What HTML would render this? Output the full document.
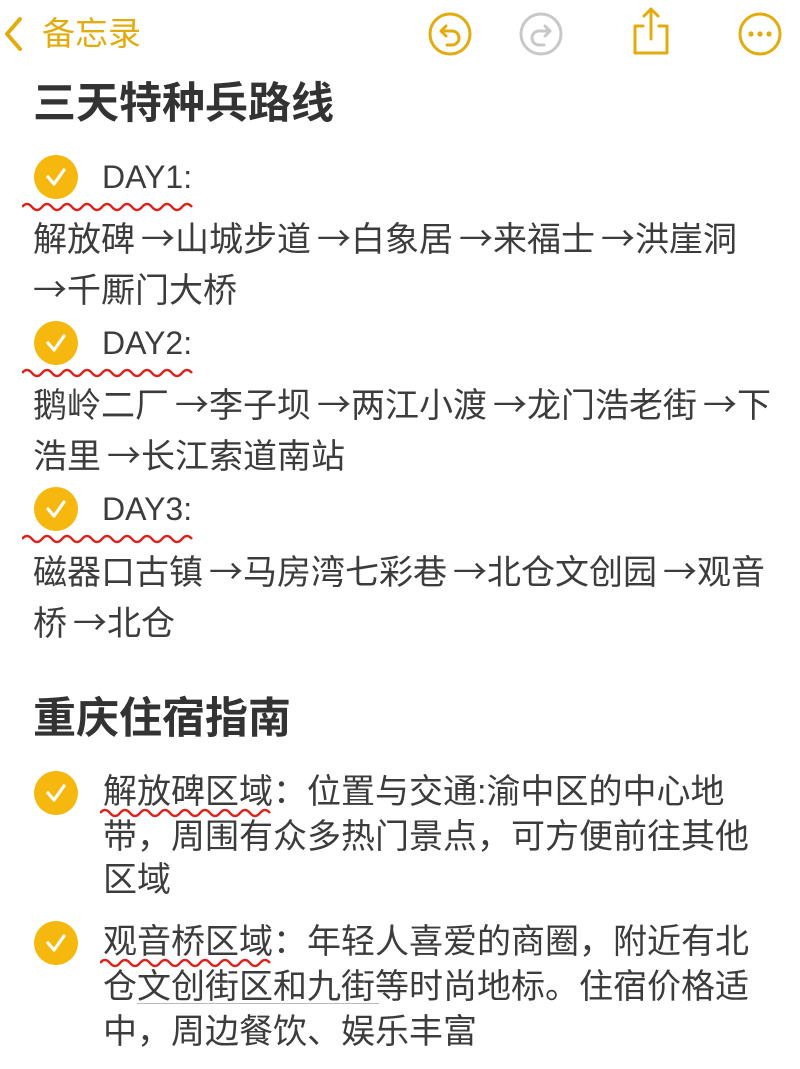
<!DOCTYPE html>
<html><head><meta charset="utf-8"><style>
body{margin:0;width:800px;height:1069px;background:#fff;position:relative;overflow:hidden;font-family:"Liberation Sans","Noto Sans CJK SC",sans-serif;color:#3c3c3c}
.t{position:absolute;white-space:nowrap;line-height:1;font-size:34px}
.h{font-size:43px;font-weight:bold;color:#333}
.a{font-family:"Noto Sans CJK SC",sans-serif;margin-left:6px}
.ck{position:absolute;width:44px;height:44px;border-radius:50%;background:#f6b80f}
.ck svg{position:absolute;left:0;top:0}
.sq{position:absolute}
</style></head><body>
<svg style="position:absolute;left:0;top:0" width="800" height="70">
<path d="M20 19 L7 34 L20 49" fill="none" stroke="#e3ac0e" stroke-width="4" stroke-linecap="round" stroke-linejoin="round"/>
<g fill="none" stroke="#e3ac0e" stroke-width="3"><circle cx="450" cy="34" r="20"/><path d="M446 26 L441 31 L446 36 M441 31 H452 A7 7 0 0 1 452 45 H447" stroke-linecap="round" stroke-linejoin="round"/></g>
<g fill="none" stroke="#c8c8c8" stroke-width="3"><circle cx="541" cy="34" r="20"/><path d="M545 26 L550 31 L545 36 M550 31 H539 A7 7 0 0 0 539 45 H544" stroke-linecap="round" stroke-linejoin="round"/></g>
<g fill="none" stroke="#e3ac0e" stroke-width="3" stroke-linecap="round" stroke-linejoin="round"><path d="M643 26 H635 V53 H667 V26 H659"/><path d="M651 9 V39 M644 16 L651 9 L658 16"/></g>
<g fill="none" stroke="#e3ac0e" stroke-width="3"><circle cx="760" cy="34" r="20"/></g>
<g fill="#e3ac0e"><circle cx="751" cy="34" r="2.6"/><circle cx="760" cy="34" r="2.6"/><circle cx="769" cy="34" r="2.6"/></g>
</svg>
<div class="t" style="left:42px;top:17px;font-size:33px;color:#e3ac0e">备忘录</div>
<div class="t h" style="left:33px;top:83px">三天特种兵路线</div>

<div class="ck" style="left:34px;top:155px"><svg width="44" height="44"><path d="M14 22 L20 29 L30 15" fill="none" stroke="#fff" stroke-width="3.2" stroke-linecap="round" stroke-linejoin="round"/></svg></div>
<div class="t" style="left:102px;top:161px;font-size:32px">DAY1:</div>
<svg class="sq" style="left:22px;top:200px" width="175" height="14"><path d="M0 7 q5 -6 10 0 t10 0 t10 0 t10 0 t10 0 t10 0 t10 0 t10 0 t10 0 t10 0 t10 0 t10 0 t10 0 t10 0 t10 0 t10 0 t10 0" fill="none" stroke="#d9231c" stroke-width="2.5"/></svg>
<div class="t" style="left:33px;top:220px">解放碑<span class="a">→</span>山城步道<span class="a">→</span>白象居<span class="a">→</span>来福士<span class="a">→</span>洪崖洞</div>
<div class="t" style="left:33px;top:271px"><span class="a" style="margin:0">→</span>千厮门大桥</div>

<div class="ck" style="left:34px;top:321px"><svg width="44" height="44"><path d="M14 22 L20 29 L30 15" fill="none" stroke="#fff" stroke-width="3.2" stroke-linecap="round" stroke-linejoin="round"/></svg></div>
<div class="t" style="left:102px;top:327px;font-size:32px">DAY2:</div>
<svg class="sq" style="left:22px;top:366px" width="175" height="14"><path d="M0 7 q5 -6 10 0 t10 0 t10 0 t10 0 t10 0 t10 0 t10 0 t10 0 t10 0 t10 0 t10 0 t10 0 t10 0 t10 0 t10 0 t10 0 t10 0" fill="none" stroke="#d9231c" stroke-width="2.5"/></svg>
<div class="t" style="left:33px;top:386px">鹅岭二厂<span class="a">→</span>李子坝<span class="a">→</span>两江小渡<span class="a">→</span>龙门浩老街<span class="a">→</span>下</div>
<div class="t" style="left:33px;top:437px">浩里<span class="a">→</span>长江索道南站</div>

<div class="ck" style="left:34px;top:487px"><svg width="44" height="44"><path d="M14 22 L20 29 L30 15" fill="none" stroke="#fff" stroke-width="3.2" stroke-linecap="round" stroke-linejoin="round"/></svg></div>
<div class="t" style="left:102px;top:493px;font-size:32px">DAY3:</div>
<svg class="sq" style="left:22px;top:532px" width="175" height="14"><path d="M0 7 q5 -6 10 0 t10 0 t10 0 t10 0 t10 0 t10 0 t10 0 t10 0 t10 0 t10 0 t10 0 t10 0 t10 0 t10 0 t10 0 t10 0 t10 0" fill="none" stroke="#d9231c" stroke-width="2.5"/></svg>
<div class="t" style="left:33px;top:553px">磁器口古镇<span class="a">→</span>马房湾七彩巷<span class="a">→</span>北仓文创园<span class="a">→</span>观音</div>
<div class="t" style="left:33px;top:604px">桥<span class="a">→</span>北仓</div>

<div class="t h" style="left:33px;top:698px">重庆住宿指南</div>

<div class="ck" style="left:34px;top:771px"><svg width="44" height="44"><path d="M14 22 L20 29 L30 15" fill="none" stroke="#fff" stroke-width="3.2" stroke-linecap="round" stroke-linejoin="round"/></svg></div>
<div class="t" style="left:103px;top:775px">解放碑区域：位置与交通:渝中区的中心地</div>
<svg class="sq" style="left:100px;top:806px" width="172" height="14"><path d="M0 7 q5 -6 10 0 t10 0 t10 0 t10 0 t10 0 t10 0 t10 0 t10 0 t10 0 t10 0 t10 0 t10 0 t10 0 t10 0 t10 0 t10 0 t10 0" fill="none" stroke="#d9231c" stroke-width="2.5"/></svg>
<div class="t" style="left:103px;top:820px">带，周围有众多热门景点，可方便前往其他</div>
<div class="t" style="left:103px;top:863px">区域</div>

<div class="ck" style="left:34px;top:921px"><svg width="44" height="44"><path d="M14 22 L20 29 L30 15" fill="none" stroke="#fff" stroke-width="3.2" stroke-linecap="round" stroke-linejoin="round"/></svg></div>
<div class="t" style="left:103px;top:925px">观音桥区域：年轻人喜爱的商圈，附近有北</div>
<svg class="sq" style="left:100px;top:956px" width="172" height="14"><path d="M0 7 q5 -6 10 0 t10 0 t10 0 t10 0 t10 0 t10 0 t10 0 t10 0 t10 0 t10 0 t10 0 t10 0 t10 0 t10 0 t10 0 t10 0 t10 0" fill="none" stroke="#d9231c" stroke-width="2.5"/></svg>
<div class="t" style="left:103px;top:970px">仓文创街区和九街等时尚地标。住宿价格适</div>
<div style="position:absolute;left:137px;top:1003px;width:242px;height:1px;background:#bbb"></div>
<div class="t" style="left:103px;top:1015px">中，周边餐饮、娱乐丰富</div>
</body></html>
